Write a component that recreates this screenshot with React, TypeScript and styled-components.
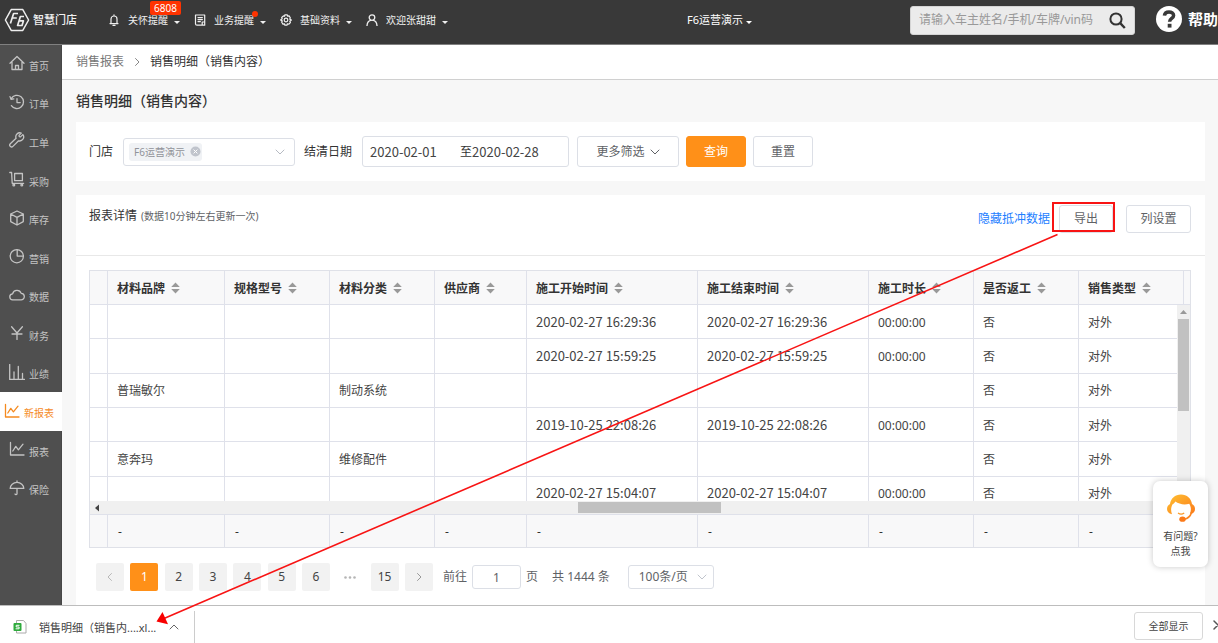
import React, { ReactNode } from "react";
import styled, { createGlobalStyle, css } from "styled-components";

const GlobalStyle = createGlobalStyle`
  *, *::before, *::after { box-sizing: border-box; }
  body {
    margin: 0;
    background: #f7f7f7;
    color: #333;
    font-family: "Noto Sans", "Noto Sans CJK SC", sans-serif;
    font-size: 12px;
    line-height: 16px;
  }
  button, input, select { font: inherit; color: inherit; margin: 0; padding: 0; }
  button { cursor: pointer; }
  a { text-decoration: none; }
  svg { display: block; flex: none; }
`;

const ORANGE = "#ff9018";

/* ---------- page frame ---------- */

const Page = styled.div`
  position: relative;
  display: flex;
  flex-direction: column;
  min-height: 100vh;
  overflow: hidden;
`;

const TopBar = styled.header`
  display: flex;
  align-items: center;
  height: 45px;
  padding: 0 0 4px 4px;
  background: #393939;
  border-bottom: 1px solid #808080;
  color: #fff;
  white-space: nowrap;
`;

const Brand = styled.a`
  display: flex;
  align-items: center;
  gap: 3px;
  width: 104px;
  color: #f2f2f2;
  font-size: 11px;
  font-weight: 500;
`;

const TopNav = styled.nav`
  display: flex;
  gap: 14px;
`;

const TopItem = styled.button`
  position: relative;
  display: flex;
  align-items: center;
  border: 0;
  background: none;
  color: #f0f0f0;
  font-size: 10px;
  > span:first-of-type { margin: 0 6px 0 8px; }
`;

const Caret = styled.i`
  margin-top: 4px;
  border: solid transparent;
  border-width: 3px 3px 0;
  border-top-color: currentColor;
`;

const CountBadge = styled.b`
  position: absolute;
  left: 42px;
  top: -11px;
  padding: 0 4px;
  border-radius: 2px;
  background: #ff3300;
  color: #fff;
  font-weight: 400;
  line-height: 14px;
`;

const Dot = styled.i`
  position: absolute;
  left: 58px;
  top: -1px;
  width: 6px;
  height: 6px;
  border-radius: 50%;
  background: #ff3300;
`;

const StoreSwitch = styled.button`
  display: flex;
  align-items: center;
  gap: 3px;
  margin: 0 158px 0 auto;
  border: 0;
  background: none;
  color: #fff;
  font-size: 11px;
`;

const SearchBox = styled.form`
  display: flex;
  align-items: center;
  width: 225px;
  height: 29px;
  padding: 0 8px;
  border: 1px solid #d4d4d4;
  border-radius: 3px;
  background: #ebebeb;
`;

const SearchInput = styled.input`
  flex: 1;
  min-width: 0;
  border: 0;
  outline: 0;
  background: none;
  color: #333;
  &::placeholder { color: #999; opacity: 1; }
`;

const IconButton = styled.button`
  display: flex;
  align-items: center;
  justify-content: center;
  border: 0;
  background: none;
`;

const Help = styled.a`
  display: flex;
  align-items: center;
  gap: 6px;
  width: 62px;
  margin: 0 0 3px 21px;
  overflow: hidden;
  color: #fff;
  font-size: 15px;
  font-weight: 700;
  line-height: 26px;
`;

const Middle = styled.div`
  display: flex;
  flex: 1;
`;

const SideBar = styled.aside`
  flex: none;
  width: 62px;
  background: #4f4f4f;
  border-right: 1px solid #474747;
`;

const SideNav = styled.nav`
  display: grid;
  grid-auto-rows: 1fr;
  height: 463px;
`;

const SideLink = styled.a<{ $active?: boolean }>`
  display: flex;
  align-items: center;
  gap: 4px;
  padding-left: ${(p) => (p.$active ? 4 : 9)}px;
  margin-right: -1px;
  color: ${(p) => (p.$active ? "#f58a1f" : "#c4c4c4")};
  background: ${(p) => (p.$active ? "#fff" : "transparent")};
  font-size: 10px;
  white-space: nowrap;
  svg { margin-bottom: 2px; }
  span { padding-top: 3px; }
`;

const Main = styled.main`
  display: flex;
  flex: 1;
  flex-direction: column;
  min-width: 0;
`;

const Crumbs = styled.nav`
  display: flex;
  align-items: center;
  gap: 8px;
  height: 35px;
  padding-left: 14px;
  border-bottom: 1px solid #d0d0d0;
  background: #fff;
  a { color: #777; }
  svg { color: #888; }
`;

const Content = styled.div`
  display: flex;
  flex: 1;
  flex-direction: column;
  padding: 0 13px 0 14px;
`;

const Title = styled.h1`
  margin: 0;
  font-size: 14px;
  font-weight: 500;
  line-height: 42px;
`;

/* ---------- filters ---------- */

const FilterCard = styled.section`
  display: flex;
  align-items: center;
  height: 59px;
  padding: 0 14px 0 13px;
  margin-bottom: 14px;
  background: #fff;
  white-space: nowrap;
`;

const FieldLabel = styled.label`
  margin-right: 10px;
`;

const TagSelect = styled.div`
  display: flex;
  align-items: center;
  justify-content: space-between;
  width: 172px;
  height: 28px;
  margin-right: 9px;
  padding: 0 9px 0 5px;
  border: 1px solid #dcdfe6;
  border-radius: 3px;
  color: #b6bac2;
`;

const Tag = styled.span`
  display: flex;
  align-items: center;
  gap: 5px;
  height: 18px;
  padding: 0 1px 0 5px;
  border-radius: 3px;
  background: #f0f2f5;
  color: #909399;
  font-size: 10px;
`;

const DateRange = styled.div`
  display: flex;
  align-items: center;
  width: 207px;
  height: 31px;
  padding-left: 7px;
  border: 1px solid #dcdfe6;
  border-radius: 3px;
`;

const DateInput = styled.input`
  width: 90px;
  border: 0;
  outline: 0;
  background: none;
  color: #444;
  font-family: "Noto Sans CJK SC", sans-serif;
  font-size: 13px;
`;

const Button = styled.button<{ $primary?: boolean; $small?: boolean; $w: number }>`
  display: flex;
  align-items: center;
  justify-content: center;
  gap: 5px;
  width: ${(p) => p.$w}px;
  height: ${(p) => (p.$small ? 28 : 31)}px;
  border: 1px solid ${(p) => (p.$primary ? ORANGE : "#dcdfe6")};
  border-radius: 3px;
  background: ${(p) => (p.$primary ? ORANGE : "#fff")};
  color: ${(p) => (p.$primary ? "#fff" : "#606266")};
`;

const ButtonRow = styled.div`
  display: flex;
  gap: 7px;
  margin-left: 8px;
`;

/* ---------- report ---------- */

const ReportCard = styled.section`
  flex: 1;
  background: #fff;
`;

const ReportHead = styled.div`
  display: flex;
  align-items: flex-start;
  justify-content: space-between;
  height: 61px;
  padding: 10px 14px 0 13px;
  border-bottom: 1px solid #e8e8e8;
`;

const ReportName = styled.h2`
  margin: 3px 0 0;
  font-size: 12px;
  font-weight: 400;
  small { margin-left: 4px; color: #606266; font-size: 10px; }
`;

const Actions = styled.div`
  display: flex;
  align-items: center;
  a { margin-right: 9px; color: #1e80ff; }
  button + button { margin-left: 13px; }
`;

const Grid = styled.div`
  margin: 14px 14px 15px 13px;
  border: 1px solid #dfe1e8;
`;

const Table = styled.table<{ $h?: number }>`
  width: 100%;
  min-width: 1094px;
  height: ${(p) => (p.$h ? `${p.$h}px` : "auto")};
  border-collapse: separate;
  border-spacing: 0;
  table-layout: fixed;
`;

const cell = css`
  padding: 2px 0 0 9px;
  border-right: 1px solid #dfe1ea;
  text-align: left;
  white-space: nowrap;
`;

const HeadCell = styled.th`
  ${cell}
  height: 34px;
  border-bottom: 1px solid #dfe1ea;
  background: #f8f8f9;
  font-weight: 700;
  &:last-child { border-right: 0; }
  svg { margin-bottom: 2px; }
`;

const HeadLabel = styled.span`
  display: flex;
  align-items: center;
  gap: 6px;
`;

const BodyCell = styled.td<{ $date?: boolean }>`
  ${cell}
  border-bottom: 1px solid #dfe1ea;
  color: #444;
  ${(p) => p.$date && css`
    padding-top: 0;
    font-family: "Noto Sans CJK SC", sans-serif;
    font-size: 13px;
  `}
`;

const FootCell = styled.td`
  ${cell}
  height: 32px;
  padding-left: 10px;
  background: #f8f8f9;
  &:last-child { border-right: 0; }
`;

const BodyArea = styled.div`
  display: flex;
  height: 196px;
`;

const BodyClip = styled.div`
  flex: 1;
  min-width: 0;
  overflow: hidden;
`;

const VTrack = styled.div`
  display: flex;
  flex: none;
  flex-direction: column;
  align-items: center;
  width: 13px;
  background: #f0f0f0;
`;

const VThumb = styled.div`
  width: 11px;
  height: 92px;
  margin-top: 5px;
  background: #c1c1c1;
`;

const HTrack = styled.div`
  display: flex;
  align-items: center;
  gap: 8px;
  height: 14px;
  padding-left: 4px;
  border-bottom: 1px solid #dfe1ea;
  background: #f0f0f0;
`;

const HThumb = styled.div`
  width: 13%;
  height: 11px;
  margin-left: 43%;
  background: #c1c1c1;
`;

const Pager = styled.div`
  display: flex;
  align-items: center;
  padding: 0 20px 14px;
  color: #606266;
`;

const PageList = styled.div`
  display: flex;
  justify-content: space-between;
  width: 337px;
  margin-right: 10px;
`;

const PageButton = styled.button<{ $on?: boolean }>`
  display: flex;
  align-items: center;
  justify-content: center;
  width: 28px;
  height: 28px;
  border: 0;
  border-radius: 2px;
  background: ${(p) => (p.$on ? ORANGE : "#f2f2f2")};
  color: ${(p) => (p.$on ? "#fff" : "#444")};
  svg { color: #999; }
  &:disabled svg { color: #b8b8b8; }
`;

const Ellipsis = styled.span`
  display: flex;
  align-items: center;
  justify-content: center;
  width: 28px;
  color: #b5b5b5;
`;

const JumpInput = styled.input`
  width: 49px;
  height: 24px;
  margin: 0 5px;
  border: 1px solid #dcdfe6;
  border-radius: 3px;
  text-align: center;
`;

const Total = styled.span`
  margin: 0 18px 0 14px;
`;

const SizeBox = styled.span`
  position: relative;
  display: flex;
  svg { position: absolute; right: 7px; top: 7px; color: #c0c4cc; pointer-events: none; }
`;

const SizeSelect = styled.select`
  width: 86px;
  height: 24px;
  padding-left: 10px;
  appearance: none;
  border: 1px solid #dcdfe6;
  border-radius: 3px;
  background: #fff;
`;

/* ---------- download shelf, helper card, annotation ---------- */

const Shelf = styled.footer`
  display: flex;
  align-items: center;
  height: 38px;
  border-top: 1px solid #bdbdbd;
  background: #fff;
  white-space: nowrap;
  overflow: hidden;
`;

const FileItem = styled.div`
  display: flex;
  align-items: center;
  align-self: flex-end;
  width: 195px;
  height: 32px;
  margin-right: auto;
  padding-left: 13px;
  border-right: 1px solid #ccc;
  font-size: 11px;
  a { width: 142px; padding: 2px 0 0 12px; color: #444; }
  button { color: #666; }
`;

const ShowAll = styled.button`
  width: 69px;
  height: 28px;
  margin: 2px 10px 0 0;
  border: 1px solid #d8d8d8;
  border-radius: 3px;
  background: #fff;
  color: #444;
  font-size: 10px;
`;

const CloseShelf = styled(IconButton)`
  flex: none;
  margin-right: -5px;
  color: #555;
`;

const HelperCard = styled.button`
  position: absolute;
  right: 10px;
  bottom: 76px;
  display: flex;
  flex-direction: column;
  align-items: center;
  width: 55px;
  height: 86px;
  padding-top: 13px;
  border: 0;
  border-radius: 7px;
  background: #fff;
  box-shadow: 0 0 6px rgba(0, 0, 0, 0.22);
  color: #444;
  font-size: 10px;
  line-height: 15px;
  svg { margin-bottom: 7px; }
`;

const Annotation = styled.svg`
  position: absolute;
  left: 0;
  top: 0;
  pointer-events: none;
`;

/* ---------- icons ---------- */

const Line = ({ children, size = 16, box = 16, w = 1.3 }: { children: ReactNode; size?: number; box?: number; w?: number }) => (
  <svg width={size} height={size} viewBox={`0 0 ${box} ${box}`} fill="none" stroke="currentColor" strokeWidth={w} strokeLinejoin="round" strokeLinecap="round" aria-hidden="true">
    {children}
  </svg>
);

const Chevron = ({ dir = "down" }: { dir?: "down" | "up" | "left" | "right" }) => {
  const d = {
    down: "M1 3l4 4 4-4",
    up: "M1 7l4-4 4 4",
    left: "M6.5 1.5L3 5l3.5 3.5",
    right: "M3.5 1.5L7 5 3.5 8.5",
  }[dir];
  return <Line size={10} box={10} w={1}><path d={d} /></Line>;
};

const Sorter = () => (
  <svg width="9" height="12" viewBox="0 0 9 12" fill="#999" aria-hidden="true">
    <path d="M4.5 0.5L8.8 5H.2zM4.5 11.5L.2 7h8.6z" />
  </svg>
);

const chartLine = <path d="M1.5 1.5v12.5H15M3.8 10l3-4.6 2.6 3.4L14 3.2" />;

const sideItems: { text: string; icon: ReactNode; active?: boolean }[] = [
  { text: "首页", icon: <path d="M1 8.2L8 1.5l7 6.7M3 7v7.5h10V7M6.5 14.2V10.5h3v3.7" /> },
  { text: "订单", icon: <path d="M2.2 4.6A6.6 6.6 0 1 1 2.4 11.6M1 2.6l1 2.8 2.8-.6M8 4.6v4h3.2" /> },
  { text: "工单", icon: <path d="M13.9 2.6l-2.4 2.3-1.2-.3-.3-1.2 2.3-2.3a4 4 0 0 0-5.2 5.2L1.3 11.8a1.7 1.7 0 0 0 2.6 2.6L9.6 8.8a4 4 0 0 0 4.3-6.2z" /> },
  { text: "采购", icon: <><path d="M.8 1.5h1.8l.6 10.8h11.4M5.6 2.5h7.8v7.2H5.6z" /><circle cx="4.8" cy="14" r=".9" /><circle cx="12.8" cy="14" r=".9" /></> },
  { text: "库存", icon: <path d="M8 1l6.3 3v7.6L8 15l-6.3-3.4V4zM1.7 4L8 7.4 14.3 4M8 7.4V15" /> },
  { text: "营销", icon: <><circle cx="7.8" cy="8.2" r="6.6" /><path d="M8.2 1.8v6.3h6" /></> },
  { text: "数据", icon: <path d="M4 12.8a3 3 0 0 1-.4-6 4.5 4.5 0 0 1 8.6-.4 3.2 3.2 0 0 1-.2 6.4z" /> },
  { text: "财务", icon: <path d="M2.6 1.8L8 8l5.4-6.2M8 8v6.4M3 9h10" /> },
  { text: "业绩", icon: <path d="M.7.5v15h15M5 8v7M9.3 2.500V15M13.500 9.500V15" /> },
  { text: "新报表", icon: chartLine, active: true },
  { text: "报表", icon: chartLine },
  { text: "保险", icon: <path d="M1.2 8.4a6.8 6 0 0 1 13.6 0zM8 1v1.4M8 8.4v5.4c0 1-1.6 1.2-2 .2" /> },
];

/* ---------- table data ---------- */

const colWidths = [18, 117, 105, 105, 92, 171, 171, 105, 105, 105];
const heads = ["", "材料品牌", "规格型号", "材料分类", "供应商", "施工开始时间", "施工结束时间", "施工时长", "是否返工", "销售类型"];
const zero = "00:00:00";
const rows = [
  ["", "", "", "", "", "2020-02-27 16:29:36", "2020-02-27 16:29:36", zero, "否", "对外"],
  ["", "", "", "", "", "2020-02-27 15:59:25", "2020-02-27 15:59:25", zero, "否", "对外"],
  ["", "普瑞敏尔", "", "制动系统", "", "", "", "", "否", "对外"],
  ["", "", "", "", "", "2019-10-25 22:08:26", "2019-10-25 22:08:26", zero, "否", "对外"],
  ["", "意奔玛", "", "维修配件", "", "", "", "", "否", "对外"],
  ["", "", "", "", "", "2020-02-27 15:04:07", "2020-02-27 15:04:07", zero, "否", "对外"],
];

const Columns = ({ spare }: { spare?: boolean }) => (
  <colgroup>
    {colWidths.map((w, i) => <col key={i} width={w} />)}
    {spare && <col />}
  </colgroup>
);

const ReportTable = () => (
  <Grid>
    <Table>
      <Columns spare />
      <thead>
        <tr>
          {heads.map((h, i) => (
            <HeadCell key={i}>{h && <HeadLabel>{h}<Sorter /></HeadLabel>}</HeadCell>
          ))}
          <HeadCell />
        </tr>
      </thead>
    </Table>
    <BodyArea>
      <BodyClip>
        <Table $h={206}>
          <Columns />
          <tbody>
            {rows.map((r, i) => (
              <tr key={i}>
                {r.map((c, j) => <BodyCell key={j} $date={j === 5 || j === 6}>{c}</BodyCell>)}
              </tr>
            ))}
          </tbody>
        </Table>
      </BodyClip>
      <VTrack>
        <svg width="7" height="9" viewBox="0 0 7 9" fill="#999"><path d="M3.5 5L7 9H0z" /></svg>
        <VThumb />
      </VTrack>
    </BodyArea>
    <HTrack>
      <svg width="5" height="8" viewBox="0 0 5 8" fill="#444"><path d="M5 .5v7L1 4z" /></svg>
      <HThumb />
    </HTrack>
    <Table>
      <Columns spare />
      <tbody>
        <tr>
          {colWidths.map((_, i) => <FootCell key={i}>{i > 0 && "-"}</FootCell>)}
          <FootCell />
        </tr>
      </tbody>
    </Table>
  </Grid>
);

export default function App() {
  return (
    <Page>
      <GlobalStyle />
      <TopBar>
        <Brand href="#">
          <svg width="26" height="24" viewBox="0 0 26 24" fill="none" stroke="#eee" strokeWidth="1.5" strokeLinejoin="round" aria-label="F6">
            <path d="M7.2 1.6h11.6L24.6 12l-5.8 10.4H7.2L1.4 12z" />
            <path d="M14 5.5H9.6L6.4 15.5M8.4 10h4.4M20 8.5h-3.6l-2.8 9h4.400l1.400-4.600h-4" strokeWidth="1.7" />
          </svg>
          智慧门店
        </Brand>
        <TopNav>
          <TopItem>
            <Line size={12} box={12} w={1.2}><path d="M2 9.6h8M3 9.4V5a3 3 0 0 1 6 0v4.4M6 .8v1M5 11.4h2" /></Line>
            <span>关怀提醒</span><Caret />
            <CountBadge>6808</CountBadge>
          </TopItem>
          <TopItem>
            <Line size={12} box={12} w={1.2}><path d="M1.5 1h9.2v10.2H3a1.5 1.5 0 0 1-1.5-1.5zM4 3.6h4.4M4 5.6h4.4M4 7.6h2.4M8.2 11V8h2.4" /></Line>
            <span>业务提醒</span><Caret />
            <Dot />
          </TopItem>
          <TopItem>
            <Line size={12} box={12} w={1.2}><path d="M4.8.8h2.4l.5 1.4 1.4-.3L10.4 4 9.6 5l1.8 1-1.6 1.2.6 1.4-1.7 1.6-1.3-.4-.3 1.4H4.9l-.5-1.4-1.5.3-1.3-2.1.8-1L.6 6l1.6-1.2-.5-1.3 1.7-1.6 1.1.4z" /><circle cx="6" cy="6" r="1.8" /></Line>
            <span>基础资料</span><Caret />
          </TopItem>
          <TopItem>
            <Line size={12} box={12} w={1.3}><circle cx="6" cy="3.6" r="2.8" /><path d="M1 11.6c.3-3.4 2.2-5 3.6-5.3M11 11.6c-.3-3.4-2.2-5-3.6-5.3" /></Line>
            <span>欢迎张甜甜</span><Caret />
          </TopItem>
        </TopNav>
        <StoreSwitch>F6运营演示<Caret /></StoreSwitch>
        <SearchBox onSubmit={(e) => e.preventDefault()}>
          <SearchInput aria-label="搜索" placeholder="请输入车主姓名/手机/车牌/vin码" />
          <IconButton aria-label="搜索">
            <svg width="17" height="17" viewBox="0 0 17 17" fill="none" stroke="#333" strokeWidth="2">
              <circle cx="7" cy="7" r="5.6" /><path d="M11.2 11.2l4.6 4.8" strokeWidth="2.4" />
            </svg>
          </IconButton>
        </SearchBox>
        <Help href="#">
          <svg width="26" height="26" viewBox="0 0 26 26" fill="none" aria-hidden="true">
            <circle cx="13" cy="13" r="13" fill="#fff" />
            <path d="M8.4 9.6C8.7 6.9 10.6 5.900 13 5.900c2.600 0 4.600 1.300 4.600 3.600 0 3-4 3-4 6.300" stroke="#393939" strokeWidth="3.5" />
            <path d="M11.7 17.8h3.8v3.8h-3.8z" fill="#393939" />
          </svg>
          帮助
        </Help>
      </TopBar>

      <Middle>
        <SideBar>
          <SideNav>
            {sideItems.map((s) => (
              <SideLink key={s.text} href="#" $active={s.active}>
                <Line>{s.icon}</Line>
                <span>{s.text}</span>
              </SideLink>
            ))}
          </SideNav>
        </SideBar>

        <Main>
          <Crumbs>
            <a href="#">销售报表</a>
            <Chevron dir="right" />
            <span>销售明细（销售内容）</span>
          </Crumbs>
          <Content>
            <Title>销售明细（销售内容）</Title>
            <FilterCard>
              <FieldLabel as="span">门店</FieldLabel>
              <TagSelect>
                <Tag>
                  F6运营演示
                  <IconButton aria-label="移除">
                    <svg width="11" height="11" viewBox="0 0 11 11">
                      <circle cx="5.5" cy="5.5" r="5" fill="#c0c4cc" />
                      <path d="M3.6 3.6l3.8 3.8M7.4 3.6L3.6 7.4" stroke="#fff" />
                    </svg>
                  </IconButton>
                </Tag>
                <Chevron />
              </TagSelect>
              <FieldLabel htmlFor="from">结清日期</FieldLabel>
              <DateRange>
                <DateInput id="from" defaultValue="2020-02-01" />
                <span>至</span>
                <DateInput aria-label="至" defaultValue="2020-02-28" />
              </DateRange>
              <ButtonRow>
                <Button $w={102}>更多筛选<Chevron /></Button>
                <Button $w={60} $primary>查询</Button>
                <Button $w={60}>重置</Button>
              </ButtonRow>
            </FilterCard>

            <ReportCard>
              <ReportHead>
                <ReportName>报表详情<small>(数据10分钟左右更新一次)</small></ReportName>
                <Actions>
                  <a href="#">隐藏抵冲数据</a>
                  <Button $w={54} $small>导出</Button>
                  <Button $w={65} $small>列设置</Button>
                </Actions>
              </ReportHead>
              <ReportTable />
              <Pager>
                <PageList>
                  <PageButton aria-label="上一页" disabled><Chevron dir="left" /></PageButton>
                  {[1, 2, 3, 4, 5, 6].map((n) => <PageButton key={n} $on={n === 1}>{n}</PageButton>)}
                  <Ellipsis>
                    <svg width="12" height="3" viewBox="0 0 12 3" fill="currentColor"><circle cx="1.5" cy="1.5" r="1.3" /><circle cx="6" cy="1.5" r="1.3" /><circle cx="10.5" cy="1.5" r="1.3" /></svg>
                  </Ellipsis>
                  <PageButton>15</PageButton>
                  <PageButton aria-label="下一页"><Chevron dir="right" /></PageButton>
                </PageList>
                <label htmlFor="jump">前往</label>
                <JumpInput id="jump" defaultValue="1" />
                <span>页</span>
                <Total>共 1444 条</Total>
                <SizeBox>
                  <SizeSelect aria-label="每页条数" defaultValue="100">
                    <option value="100">100条/页</option>
                  </SizeSelect>
                  <Chevron />
                </SizeBox>
              </Pager>
            </ReportCard>
          </Content>
        </Main>
      </Middle>

      <Shelf>
        <FileItem>
          <svg width="14" height="16" viewBox="0 0 14 16" fill="none">
            <path d="M3.5 4V1.5h7l2.5 3v9.500H3.500V12" stroke="#aaa" />
            <rect x="0.5" y="4" width="8" height="8" rx="1" fill="#2eaa3c" />
            <path d="M6.5 6.3H3.2V8h2.900v1.800H2.600" stroke="#fff" />
          </svg>
          <a href="#">销售明细（销售内....xl...</a>
          <IconButton aria-label="更多"><Chevron dir="up" /></IconButton>
        </FileItem>
        <ShowAll>全部显示</ShowAll>
        <CloseShelf aria-label="关闭"><Line size={10} box={10} w={1.5}><path d="M1 1l8 8M9 1L1 9" /></Line></CloseShelf>
      </Shelf>

      <HelperCard>
        <svg width="28" height="28" viewBox="0 0 28 28" aria-hidden="true">
          <defs>
            <linearGradient id="hair" x1="0" y1="0" x2="1" y2="1">
              <stop offset="0" stopColor="#ffc233" /><stop offset="1" stopColor="#fb7a1a" />
            </linearGradient>
          </defs>
          <path d="M14 .5C8 .5 3.8 4.5 3 10 1 11 0 12.8 0 15c0 2.600 1.600 4.600 5 5.200-1.300-3.200-1.200-7 .6-10 1.300-.5 2.200-1.400 2.800-2.600 3.400 2.600 9 3.600 13.800 2.200 1.900 3 2.200 6.400.8 9.600l1.200.4c2.600-.6 3.800-2.400 3.800-4.800 0-2.200-1-4-3-5C24.200 4.500 20 .5 14 .5z" fill="url(#hair)" />
          <path d="M24.5 18.500c-1 3.600-3.500 6-7.500 6.700" fill="none" stroke="#fb8420" strokeWidth="1.6" />
          <ellipse cx="15.5" cy="25.2" rx="3.2" ry="2.6" fill="#fb7a1a" />
          <path d="M11 19c1.800 1.400 4.400 1.400 6.200 0" fill="none" stroke="#fb9a2a" strokeWidth="1.2" />
        </svg>
        <span>有问题?</span>
        <span>点我</span>
      </HelperCard>

      <Annotation width="1218" height="643" viewBox="0 0 1218 643" fill="none" stroke="#f81414" aria-hidden="true">
        <rect x="1053" y="203" width="61" height="28" strokeWidth="2" />
        <path d="M1057.5 234.5L164 618.5" strokeWidth="1.6" />
        <path d="M156.5 621.5l6-9.500 5.500 12.300z" fill="#f80000" stroke="none" />
      </Annotation>
    </Page>
  );
}
